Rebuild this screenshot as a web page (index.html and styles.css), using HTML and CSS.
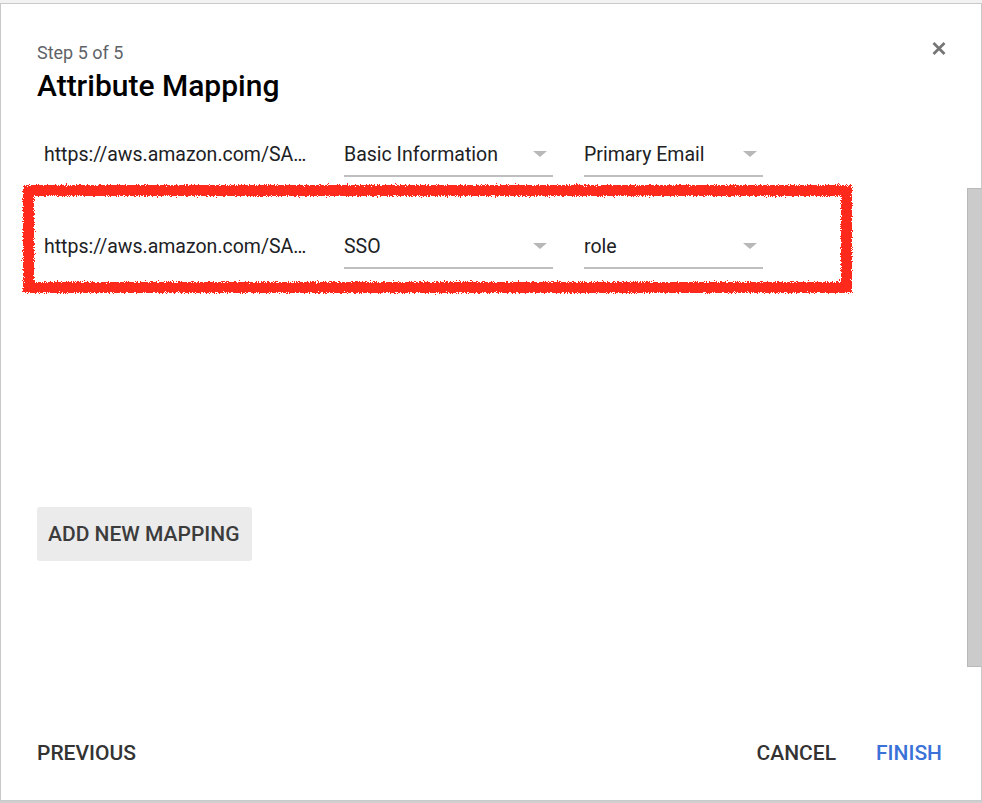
FILE: index.html
```html
<!DOCTYPE html>
<html lang="en">
<head>
<meta charset="utf-8">
<title>Attribute Mapping</title>
<link rel="stylesheet" href="styles.css">
</head>
<body>
<svg class="defs" width="0" height="0" aria-hidden="true">
  <filter id="rough" x="-5%" y="-20%" width="110%" height="140%">
    <feTurbulence type="fractalNoise" baseFrequency="0.9" numOctaves="2" seed="3" result="noise"/>
    <feDisplacementMap in="SourceGraphic" in2="noise" scale="6" xChannelSelector="R" yChannelSelector="G"/>
  </filter>
</svg>
<div class="page-strip">
  <span class="strip-status">Status ▲</span>
  <span class="strip-cert">Certificate</span>
</div>
<div class="dialog">
  <header class="dlg-head">
    <div class="titles">
      <div class="step">Step 5 of 5</div>
      <h1 class="title">Attribute Mapping</h1>
    </div>
    <button class="close" aria-label="Close">
      <svg width="14" height="15" viewBox="0 0 14 15"><path d="M1.5 2 L12.5 13 M12.5 2 L1.5 13" stroke="#757575" stroke-width="2.7" stroke-linecap="butt"/></svg>
    </button>
  </header>
  <div class="dlg-body">
    <div class="content">
      <div class="mapping-list">
        <div class="row">
          <div class="attr">https://aws.amazon.com/SA…</div>
          <div class="select sel-cat"><span>Basic Information</span><i class="caret"></i></div>
          <div class="select sel-field"><span>Primary Email</span><i class="caret"></i></div>
        </div>
        <div class="row">
          <div class="attr">https://aws.amazon.com/SA…</div>
          <div class="select sel-cat"><span>SSO</span><i class="caret"></i></div>
          <div class="select sel-field"><span>role</span><i class="caret"></i></div>
          <span class="annotation"></span>
        </div>
      </div>
      <button class="add-btn">ADD NEW MAPPING</button>
    </div>
    <div class="scrollbar"><div class="thumb"></div></div>
  </div>
  <footer class="dlg-foot">
    <button class="txt-btn">PREVIOUS</button>
    <div class="foot-right">
      <button class="txt-btn">CANCEL</button>
      <button class="txt-btn primary">FINISH</button>
    </div>
  </footer>
</div>
</body>
</html>
```
FILE: styles.css
```css
* { box-sizing: border-box; }
html, body { margin: 0; padding: 0; }
body {
  width: 982px;
  height: 803px;
  overflow: hidden;
  background: #cfcfcf;
  font-family: Roboto, "Noto Sans", Arial, sans-serif;
  color: #202124;
}
.defs { position: absolute; width: 0; height: 0; }

.page-strip {
  height: 3px;
  overflow: hidden;
  background: #f2f2f2;
  display: flex;
  color: #9a9a9a;
  font-size: 17px;
  line-height: 18px;
}
.strip-status, .strip-cert { display: block; margin-top: -15px; }
.strip-status { margin-left: 219px; }
.strip-cert { margin-left: 417px; }

.dialog {
  width: 982px;
  height: 798px;
  background: #fff;
  border: 1px solid #c9c9c9;
  display: flex;
  flex-direction: column;
}

.dlg-head {
  display: flex;
  justify-content: space-between;
  align-items: flex-start;
  padding: 39px 35px 0 36px;
}
.step {
  font-size: 18px;
  line-height: 20px;
  color: #5f6368;
}
.title {
  margin: 6px 0 0;
  font-size: 30px;
  line-height: 34px;
  font-weight: 500;
  color: #000;
}
.close {
  border: 0;
  background: none;
  padding: 0;
  margin-top: -2px;
  width: 14px;
  height: 15px;
  display: block;
}
.close svg { display: block; }

.dlg-body {
  flex: 1;
  display: flex;
  min-height: 0;
}
.content {
  flex: 1;
  padding: 17px 0 0 36px;
}
.mapping-list { display: flex; flex-direction: column; }
.row {
  position: relative;
  height: 92px;
  display: flex;
  align-items: flex-end;
  padding: 0 0 35px 7px;
}
.attr {
  width: 300px;
  font-size: 19.5px;
  line-height: 24px;
  padding-bottom: 10px;
  color: #202124;
  white-space: nowrap;
}
.select {
  display: flex;
  align-items: center;
  justify-content: space-between;
  font-size: 19.5px;
  line-height: 24px;
  padding: 0 6px 8px 0;
  border-bottom: 2px solid #bfbfbf;
  color: #202124;
}
.sel-cat { width: 209px; margin-right: 31px; }
.sel-field { width: 179px; }
.caret {
  width: 0;
  height: 0;
  border-left: 7px solid transparent;
  border-right: 7px solid transparent;
  border-top: 6px solid #b8b8b8;
  margin-top: -2px;
}
.annotation {
  position: absolute;
  left: -14px;
  top: -27px;
  width: 829px;
  height: 108px;
  border: 11px solid #ff2c1f;
  filter: url(#rough);
  pointer-events: none;
}

.add-btn {
  margin-top: 203px;
  height: 54px;
  padding: 0 13px 0 11px;
  border: 0;
  border-radius: 3px;
  background: #ebebeb;
  font-family: inherit;
  font-size: 21px;
  font-weight: 500;
  color: #3c3c3c;
  letter-spacing: 0;
}

.scrollbar {
  width: 14px;
  padding-top: 85px;
}
.thumb {
  height: 479px;
  background: #cbcbcb;
  border: 1px solid #b9b9b9;
  border-right: 0;
}

.dlg-foot {
  display: flex;
  justify-content: space-between;
  align-items: center;
  padding: 0 39px 35px 36px;
}
.foot-right { display: flex; gap: 40px; }
.txt-btn {
  border: 0;
  background: none;
  padding: 0;
  font-family: inherit;
  font-size: 21px;
  line-height: 24px;
  font-weight: 500;
  color: #333;
}
.txt-btn.primary { color: #3a72d8; }
```
